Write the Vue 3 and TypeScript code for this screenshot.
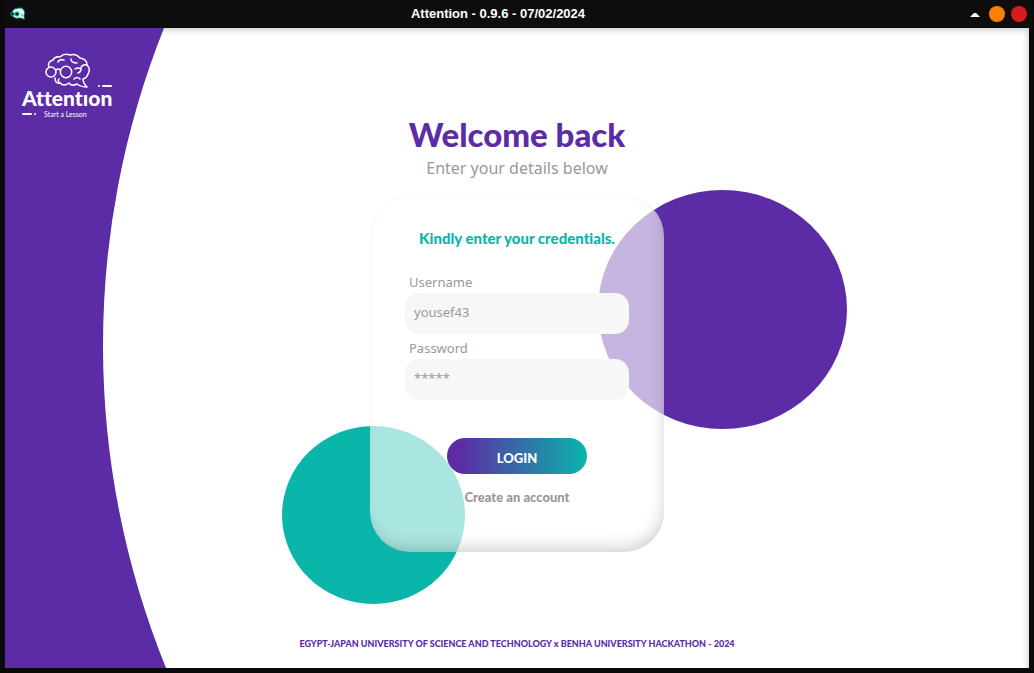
<script setup lang="ts">
import { ref } from 'vue'

const username = ref('')
const password = ref('')
</script>

<template>
  <div class="window">
    <header class="titlebar">
      <svg class="app-icon" viewBox="0 0 18 16" aria-hidden="true">
        <path
          d="M4 4 Q6 2 9 2 Q13 1 15 4 Q17 7 15 10 L16 13.500 L11 12 Q7 13 5 11.500 Q2 10 3 6 Z"
          fill="#c8fff5"
          stroke="#0b4f4d"
          stroke-width="1"
        />
        <circle cx="3.500" cy="8" r="1.700" fill="#0d0d0d" stroke="#16a79c" />
        <circle cx="8" cy="8" r="2" fill="#0d0d0d" stroke="#16a79c" />
        <path d="M12 9 H14" stroke="#16a79c" />
      </svg>
      <h1 class="title">Attention - 0.9.6 - 07/02/2024</h1>
      <div class="controls">
        <button class="control minimize" type="button" aria-label="Minimize">
          <svg viewBox="0 0 10 5" aria-hidden="true"><path d="M0 5 L4 1 H6 L10 5 Z" fill="#fff" /></svg>
        </button>
        <button class="control maximize" type="button" aria-label="Maximize"></button>
        <button class="control close" type="button" aria-label="Close"></button>
      </div>
    </header>

    <main class="page">
      <svg class="side" viewBox="0 0 162 640" preserveAspectRatio="none" aria-hidden="true">
        <path d="M0 0 H159 A857 857 0 0 0 161 640 H0 Z" fill="#5c2ba6" />
      </svg>

      <div class="brand">
        <svg class="brain" viewBox="0 0 46 36" aria-hidden="true">
          <g fill="none" stroke="#fff" stroke-width="1.500" stroke-linecap="round" stroke-linejoin="round">
            <circle cx="6" cy="19" r="5" />
            <circle cx="21" cy="19" r="5.700" />
            <path d="M11 17 Q13 15 15.500 17" />
            <path d="M4 14 Q2 9 8 7 Q10 3 15 4 Q19 0 25 2 Q31 0 35 5 Q42 6 42 12 Q46 16 43 21 Q42 25 38 26 Q38 30 42 34 Q36 34 32 31 Q27 34 24 30 Q19 34 15 30 Q10 31 10 25" />
            <path d="M13 9 Q14 6 19 7" />
            <path d="M26 6 Q26 10 32 10" />
            <path d="M42 12 Q37 11 36 15 M30 16 Q33 14 36 16 Q36 19 33 20" />
            <path d="M29 26 Q32 23 35 26 M15 30 Q12 28 14 26" />
          </g>
        </svg>
        <svg class="dash upper" viewBox="0 0 14 2" aria-hidden="true">
          <circle cx="1" cy="1" r="1" fill="#fff" /><rect x="4" width="10" height="2" rx="1" fill="#fff" />
        </svg>
        <strong class="brand-name">Attentıon</strong>
        <div class="tagline">
          <svg class="dash" viewBox="0 0 14 2" aria-hidden="true">
            <rect width="10" height="2" rx="1" fill="#fff" /><circle cx="13" cy="1" r="1" fill="#fff" />
          </svg>
          <span>Start a Lesson</span>
        </div>
      </div>

      <section class="content">
        <h2 class="heading">Welcome back</h2>
        <p class="subheading">Enter your details below</p>

        <div class="stage">
          <span class="disc purple"></span>
          <span class="disc teal"></span>
          <form class="card" @submit.prevent>
            <p class="prompt">Kindly enter your credentials.</p>
            <label for="username">Username</label>
            <input id="username" v-model="username" type="text" placeholder="yousef43" />
            <label for="password">Password</label>
            <input id="password" v-model="password" type="password" placeholder="*****" />
            <button class="login" type="submit">LOGIN</button>
            <a class="create" href="#">Create an account</a>
          </form>
        </div>
      </section>

      <footer class="footer">
        EGYPT-JAPAN UNIVERSITY OF SCIENCE AND TECHNOLOGY x BENHA UNIVERSITY HACKATHON - 2024
      </footer>
    </main>
  </div>
</template>

<style>
body {
  background: #000;
}
</style>

<style scoped>
.window {
  box-sizing: border-box;
  min-height: 100vh;
  display: flex;
  flex-direction: column;
  padding: 0 5px 5px;
  background: #0a0a0a;
  font-family: Lato, "Noto Sans", sans-serif;
  font-variant-ligatures: none;
}

.titlebar {
  display: grid;
  grid-template-columns: 80px 1fr 80px;
  align-items: center;
  height: 28px;
  margin-right: -3px;
  background: #0d0d0d;
}

.app-icon {
  width: 18px;
  height: 16px;
  margin-left: 4px;
}

.title {
  margin: 0;
  padding-right: 41px;
  color: #fff;
  font: 700 13px/28px "Liberation Sans", Arial, sans-serif;
  text-align: center;
}

.controls {
  display: flex;
  align-items: center;
  justify-content: flex-end;
  gap: 6px;
  padding-right: 5px;
}

.control {
  width: 16px;
  height: 16px;
  padding: 0;
  border: 0;
  border-radius: 50%;
}

.minimize {
  display: grid;
  place-items: center;
  background: none;
}

.minimize svg {
  width: 10px;
  height: 5px;
}

.maximize {
  background: #ff8000;
}

.close {
  background: #d91a1a;
}

.page {
  position: relative;
  flex: 1;
  display: flex;
  flex-direction: column;
  align-items: center;
  overflow: hidden;
  background: #fff;
  box-shadow: inset -3px 4px 6px -2px rgba(0, 0, 0, 0.2);
}

.side {
  position: absolute;
  top: 0;
  left: 0;
  width: 162px;
  height: 100%;
}

.brand {
  position: absolute;
  top: 25px;
  left: 17px;
  display: flex;
  flex-direction: column;
  width: 92px;
  color: #fff;
}

.brain {
  width: 46px;
  height: 36px;
  margin-left: 23px;
}

.dash {
  flex: none;
  width: 14px;
  height: 2px;
}

.upper {
  align-self: flex-end;
  margin: -4px 2px 0 0;
}

.brand-name {
  font-size: 21px;
  font-weight: 900;
  line-height: 22px;
}

.tagline {
  display: flex;
  align-items: center;
  gap: 8px;
  padding-top: 1px;
  font-size: 7px;
  line-height: 8px;
  white-space: nowrap;
}

.content {
  position: relative;
  display: flex;
  flex-direction: column;
  align-items: center;
  padding-top: 84px;
}

.heading {
  margin: 0;
  color: #5c2ba6;
  font-size: 33px;
  font-weight: 900;
  line-height: 44px;
}

.subheading {
  margin: 0;
  color: #999;
  font: 400 16px/24px "Noto Sans", sans-serif;
}

.stage {
  position: relative;
  margin-top: 16px;
}

.disc {
  position: absolute;
  border-radius: 50%;
}

.purple {
  top: -6px;
  left: 228px;
  width: 249px;
  height: 239px;
  background: #5c2ba6;
}

.teal {
  top: 230px;
  left: -88px;
  width: 183px;
  height: 178px;
  background: #0ab5aa;
}

.card {
  position: relative;
  box-sizing: border-box;
  display: flex;
  flex-direction: column;
  width: 294px;
  padding: 30px 35px 44px;
  border-radius: 40px;
  background: rgba(255, 255, 255, 0.65);
  box-shadow:
    inset 0 0 2px rgba(0, 0, 0, 0.05),
    inset -4px -9px 16px -5px rgba(0, 0, 0, 0.18);
}

.prompt {
  margin: 0 0 17px;
  color: #0ab5aa;
  font-size: 15px;
  font-weight: 900;
  line-height: 24px;
  text-align: center;
}

label {
  height: 24px;
  margin-top: 2px;
  padding-left: 4px;
  color: #999;
  font: 400 13px/26px "Noto Sans", sans-serif;
}

input {
  box-sizing: border-box;
  width: 100%;
  height: 41px;
  margin: 0 0 -1px;
  padding: 0 9px 3px;
  border: 0;
  border-radius: 14px;
  outline: none;
  background: #f7f7f7;
  color: #999;
  font: 400 13px/20px "Noto Sans", sans-serif;
}

input::placeholder {
  color: #999;
  opacity: 1;
}

.login {
  align-self: center;
  width: 140px;
  height: 36px;
  margin: 39px 0 12px;
  padding: 4px 0 0;
  border: 0;
  border-radius: 18px;
  background: linear-gradient(90deg, #5c2ba6 8%, #0ab5aa 100%);
  color: #fff;
  font: 900 13px/20px Lato, sans-serif;
}

.create {
  align-self: center;
  color: #999;
  font-size: 13px;
  font-weight: 900;
  line-height: 22px;
  text-decoration: none;
}

.footer {
  position: relative;
  margin-top: auto;
  padding-bottom: 16px;
  color: #5c2ba6;
  font-size: 9px;
  font-weight: 900;
  line-height: 16px;
}
</style>
